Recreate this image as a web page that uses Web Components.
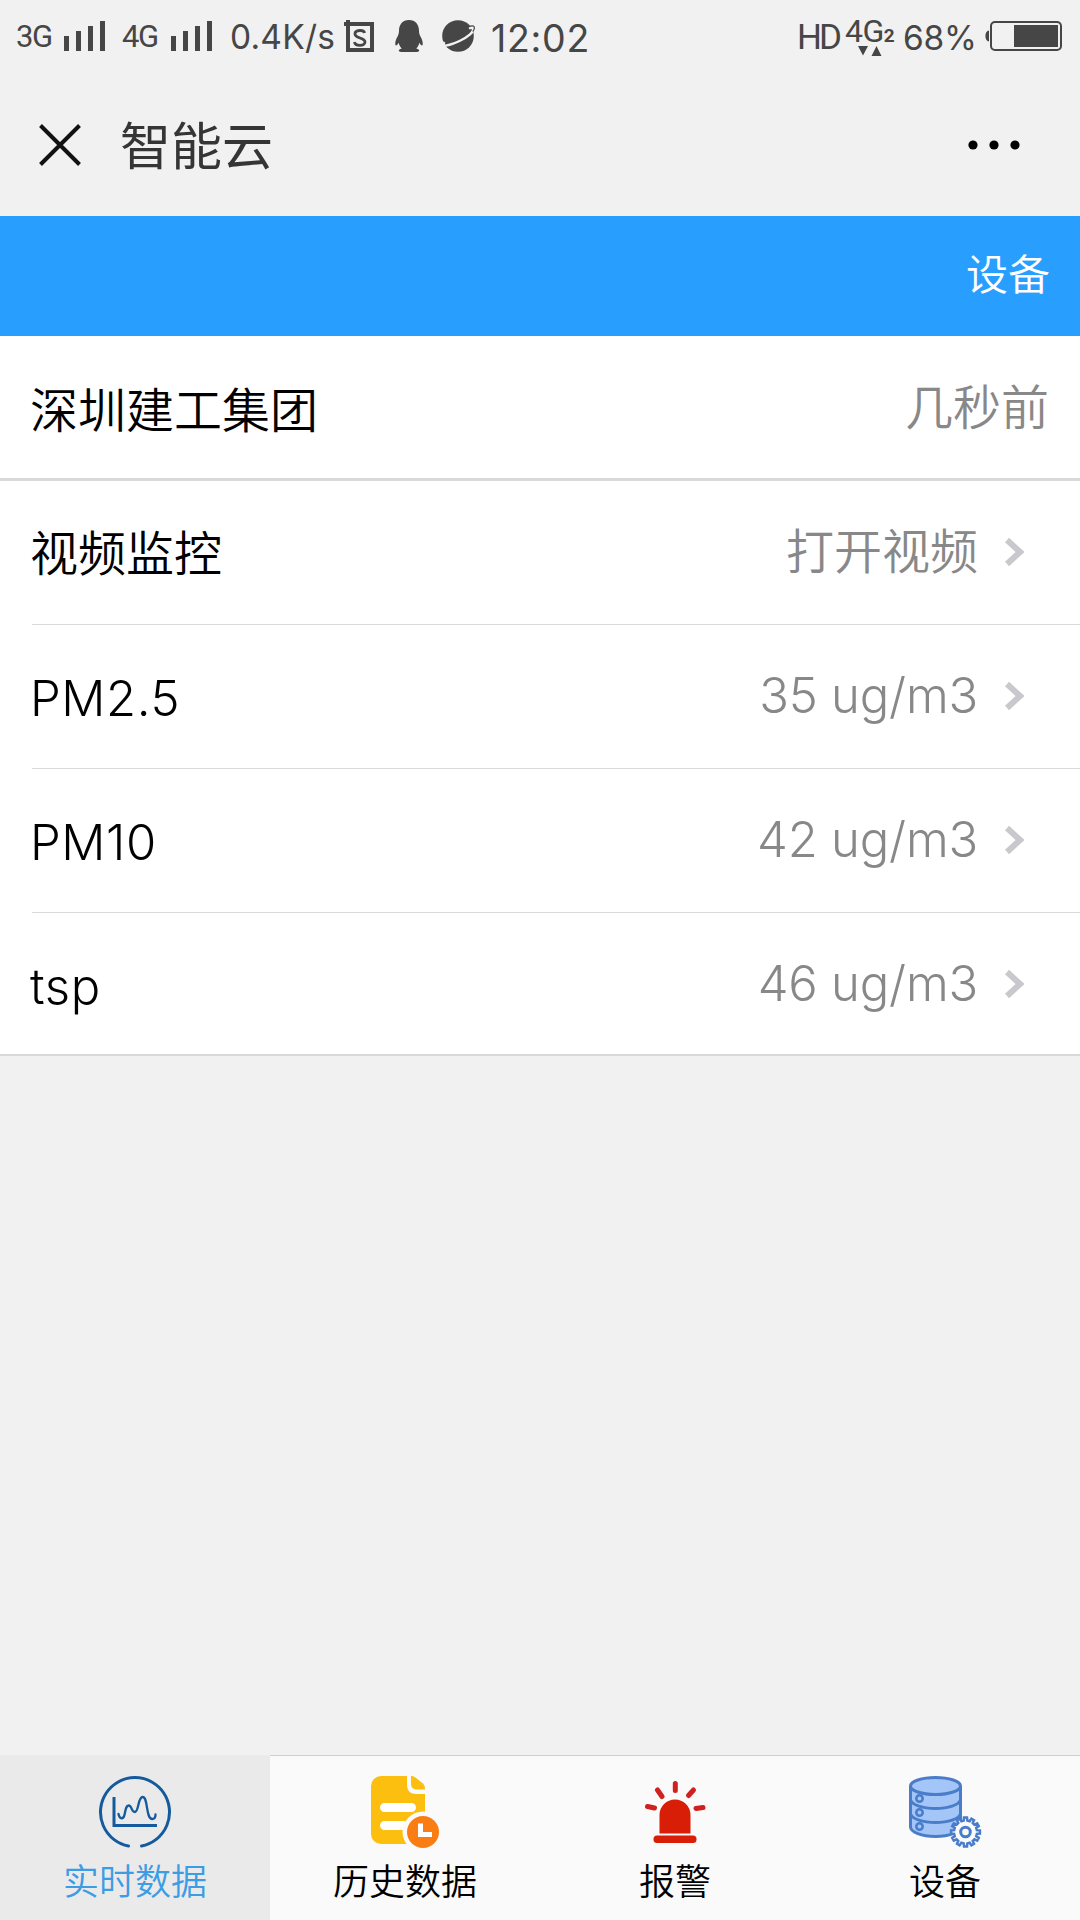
<!DOCTYPE html>
<html lang="zh-CN">
<head>
<meta charset="UTF-8">
<meta name="viewport" content="width=device-width, initial-scale=1.0">
<title>智能云</title>
<style>
  body {
    margin: 0;
    background-color: #f1f1f1;
    font-family: Inter, "Noto Sans CJK SC", sans-serif;
  }
</style>
</head>
<body>
<cloud-app></cloud-app>

<script>
class SignalBars extends HTMLElement {
  constructor() {
    super();
    this.attachShadow({ mode: "open" }).innerHTML = `
    <style>
      :host {
        display: flex;
        align-items: flex-end;
        gap: 7px;
        height: 30px;
      }

      i {
        width: 5px;
        background-color: #464646;
      }
    </style>
    <i style="height: 15px"></i>
    <i style="height: 20px"></i>
    <i style="height: 25px"></i>
    <i style="height: 30px"></i>
  `;
  }
}

customElements.define("signal-bars", SignalBars);

class StatusBar extends HTMLElement {
  constructor() {
    super();
    this.attachShadow({ mode: "open" }).innerHTML = `
    <style>
      :host {
        display: flex;
        justify-content: space-between;
        height: 72px;
        padding: 0 18px 0 16px;
        color: #464646;
        white-space: nowrap;
      }

      .group {
        display: flex;
        align-items: center;
        height: 72px;
      }

      .net {
        width: 36px;
        font-family: Roboto, sans-serif;
        font-size: 31px;
        letter-spacing: -1.5px;
      }

      .speed {
        width: 105px;
        margin-left: 18px;
        padding-top: 2px;
        font-size: 33.5px;
        letter-spacing: 0.2px;
      }

      .time {
        margin-left: 16px;
        padding-top: 4px;
        font-size: 37.5px;
        letter-spacing: 0.7px;
      }

      .hd {
        width: 48px;
        font-family: Roboto, sans-serif;
        font-size: 35px;
        letter-spacing: -3px;
        padding-top: 2px;
      }

      .mobile {
        display: flex;
        flex-direction: column;
        width: 50px;
        padding-top: 2px;
      }

      .mobile div {
        height: 25px;
        font-family: Roboto, sans-serif;
        font-size: 32px;
        line-height: 27px;
        letter-spacing: -0.5px;
      }

      .mobile b {
        font-size: 19px;
      }

      .mobile svg {
        margin: 3px 0 0 13px;
      }

      .percent {
        width: 72px;
        margin: 3px 10px 0 8px;
        font-size: 33.5px;
        letter-spacing: -0.3px;
      }

      svg {
        display: block;
      }
    </style>
    <div class="group">
      <span class="net">3G</span>
      <signal-bars style="margin-left: 12px"></signal-bars>
      <span class="net" style="margin-left: 17px; width: 38px">4G</span>
      <signal-bars style="margin-left: 11px"></signal-bars>
      <span class="speed">0.4K/s</span>
      <svg style="margin-left: 9px" width="31" height="32" viewBox="0 0 31 32">
        <path d="M4 0v32M0 4h30M28 3v29M2 30h28" fill="none" stroke="#464646" stroke-width="4"/>
        <path d="M20.500 13C20 9.500 11 9.500 11 14s10 3.500 10 8-10 4.500-10.500 0" fill="none" stroke="#464646" stroke-width="2.800"/>
      </svg>
      <svg style="margin-left: 20px" width="28" height="32" viewBox="0 0 28 32" fill="#464646">
        <path d="M14 0C7.500 0 4 4.800 4 10.500c0 2-.3 3.500-1.200 5.500C1 19 0 22 .3 24.500c.3 1.800 1.800 1 3.400-1.700.5 2.400 1.500 4.200 3 5.700-2 .5-2.900 1.300-2.900 2 0 1 1.500 1.500 4.700 1.500h11c3.200 0 4.700-.5 4.700-1.500 0-.7-.9-1.500-2.900-2 1.500-1.500 2.500-3.300 3-5.700 1.600 2.700 3.100 3.500 3.400 1.700.3-2.500-.7-5.500-2.500-8.500-.9-2-1.200-3.500-1.200-5.500C24 4.800 20.500 0 14 0z"/>
      </svg>
      <svg style="margin-left: 19px" width="33" height="32" viewBox="0 0 33 32">
        <circle cx="16" cy="16" r="15.800" fill="#464646"/>
        <path d="M27 8.500c2.500-1 3.800-.6 4 .5.800 3-5 8-13.500 12S2.500 26.500 1.800 24.800c-.3-.8 0-1.800.7-2.800" fill="none" stroke="#f1f1f1" stroke-width="2.400"/>
        <path d="M27 6.500c3-1 4.800-.8 5.300.8.300 1.200-.3 2.700-1.500 4.300" fill="none" stroke="#464646" stroke-width="1.200"/>
      </svg>
      <span class="time">12:02</span>
    </div>
    <div class="group">
      <span class="hd">HD</span>
      <div class="mobile">
        <div>4G<b>2</b></div>
        <svg width="24" height="10" viewBox="0 0 24 10" fill="#464646">
          <path d="M0 0h10L5 9.500zM13.500 10h10L18.500 0z"/>
        </svg>
      </div>
      <span class="percent">68%</span>
      <svg width="77" height="30" viewBox="0 0 77 30">
        <path d="M4 9.500C-.8 10 -.8 20 4 20.500z" fill="#464646"/>
        <rect x="6" y="1" width="70" height="28" rx="4" fill="none" stroke="#464646" stroke-width="2"/>
        <rect x="29" y="4" width="44" height="22" fill="#464646"/>
      </svg>
    </div>
  `;
  }
}

customElements.define("status-bar", StatusBar);

class NavBar extends HTMLElement {
  constructor() {
    super();
    this.attachShadow({ mode: "open" }).innerHTML = `
    <style>
      :host {
        display: flex;
        align-items: center;
        height: 144px;
        padding: 2px 60px 0 39px;
        box-sizing: border-box;
      }

      h1 {
        flex: 1;
        margin: 0 0 0 39px;
        padding-top: 3px;
        color: #353535;
        font-size: 51px;
        font-weight: 400;
        line-height: 72px;
      }
    </style>
    <svg width="42" height="42" viewBox="0 0 42 42">
      <path d="M1.500 1.500l39 39M40.500 1.500l-39 39" stroke="#111" stroke-width="4"/>
    </svg>
    <h1><slot></slot></h1>
    <svg width="52" height="10" viewBox="0 0 52 10">
      <circle cx="5" cy="5" r="4.600"/>
      <circle cx="26" cy="5" r="4.600"/>
      <circle cx="47" cy="5" r="4.600"/>
    </svg>
  `;
  }
}

customElements.define("nav-bar", NavBar);

class AppHeader extends HTMLElement {
  constructor() {
    super();
    this.attachShadow({ mode: "open" }).innerHTML = `
    <style>
      :host {
        display: flex;
        align-items: center;
        justify-content: flex-end;
        height: 120px;
        padding: 0 30px 10px 0;
        box-sizing: border-box;
        background-color: #289fff;
        color: #fff;
        font-size: 42px;
        font-weight: 350;
      }
    </style>
    <slot></slot>
  `;
  }
}

customElements.define("app-header", AppHeader);

class CellItem extends HTMLElement {
  constructor() {
    super();
    this.attachShadow({ mode: "open" }).innerHTML = `
    <style>
      :host {
        display: block;
        padding-left: 32px;
        background-color: #fff;
        font-size: 48px;
        font-weight: 350;
        line-height: 72px;
      }

      .row {
        display: flex;
        align-items: center;
        justify-content: space-between;
        height: 144px;
        padding-right: 31px;
        box-sizing: border-box;
        border-bottom: 1px solid #d9d9d9;
      }

      :host([head]) {
        border-bottom: 3px solid #d9d9d9;
      }

      :host([head]) .row {
        height: 142px;
        padding-top: 4px;
        border: 0;
      }

      :host([last]) {
        border-bottom: 2px solid #d9d9d9;
      }

      :host([last]) .row {
        height: 141px;
        padding-top: 2px;
        border: 0;
      }

      .label {
        margin-left: -2px;
        padding-top: 3px;
        color: #000;
      }

      .value {
        display: flex;
        align-items: center;
        padding-bottom: 2px;
        color: #888;
      }

      :host([data]) {
        font-size: 49px;
        font-weight: 300;
      }

      :host([data]) .label {
        padding-top: 5px;
        letter-spacing: 0.6px;
      }

      :host([data]) .value {
        letter-spacing: -0.2px;
      }

      svg {
        display: none;
        margin: 1px 25px 0 27px;
      }

      :host([link]) svg {
        display: block;
      }
    </style>
    <div class="row">
      <span class="label"><slot></slot></span>
      <span class="value">
        <slot name="value"></slot>
        <svg width="19" height="28" viewBox="0 0 19 28">
          <path d="M2 2l13 12L2 26" fill="none" stroke="#c8c8cd" stroke-width="6"/>
        </svg>
      </span>
    </div>
  `;
  }
}

customElements.define("cell-item", CellItem);

class TabItem extends HTMLElement {
  constructor() {
    super();
    this.attachShadow({ mode: "open" }).innerHTML = `
    <style>
      :host {
        display: flex;
        flex: 1;
        flex-direction: column;
        align-items: center;
        padding-top: 20px;
        box-sizing: border-box;
        border-top: 1px solid #d0d0d0;
        color: #000;
        font-size: 36px;
        font-weight: 350;
        line-height: 54px;
      }

      :host([active]) {
        border-top-color: #ececec;
        background-color: #eaeaea;
        color: #3c9ce4;
      }

      ::slotted(svg) {
        display: block;
        width: 72px;
        height: 72px;
        margin-bottom: 7px;
        overflow: visible;
      }
    </style>
    <slot name="icon"></slot>
    <span><slot></slot></span>
  `;
  }
}

customElements.define("tab-item", TabItem);

// outline of the settings gear, teeth are spread evenly round the centre
function gearPath(cx, cy, inner, outer, teeth) {
  const points = [];
  for (let i = 0; i < teeth; i++) {
    [[-0.3, inner], [-0.2, outer], [0.2, outer], [0.3, inner]].forEach(([shift, r]) => {
      const a = ((i + shift) / teeth) * Math.PI * 2;
      points.push(`${(cx + r * Math.sin(a)).toFixed(2)} ${(cy - r * Math.cos(a)).toFixed(2)}`);
    });
  }
  return `M${points.join("L")}z`;
}

class TabBar extends HTMLElement {
  constructor() {
    super();
    this.attachShadow({ mode: "open" }).innerHTML = `
    <style>
      :host {
        display: flex;
        height: 165px;
        background-color: #fafafa;
      }
    </style>
    <tab-item active>
      <svg slot="icon" viewBox="0 0 72 72" fill="none" stroke="#145a9c" stroke-linecap="round">
        <path d="M29.500 70A34.500 34.500 0 1 1 42.500 70" stroke-width="3"/>
        <path d="M15 22.500v27h41.500" stroke-width="3" stroke-linecap="square"/>
        <path d="M19.500 38c1 5.500 5 6 6.200 0 1-5.500 1.500-8.500 4-8.500 3.300 0 2.500 6.500 6 6.500 4.300 0 3-15 8-15 5.500 0 3 22 9.500 22 2 0 3.300-2 3.300-4.500" stroke-width="2.300"/>
      </svg>
      实时数据
    </tab-item>
    <tab-item>
      <svg slot="icon" viewBox="0 0 72 72">
        <path d="M12 0h26v8c0 7 3 10 10 10h8v50H12A10 10 0 0 1 2 58V10A10 10 0 0 1 12 0z" fill="#fdbf0f"/>
        <path d="M42 0c2 0 3 .5 5 2l7 5.500c1.500 1.500 2 3 2 6h-7c-5 0-7-2-7-6z" fill="#fdbf0f"/>
        <path d="M15.500 31.500h27M15.500 49.500H34" stroke="#fff" stroke-width="9" stroke-linecap="round"/>
        <circle cx="54" cy="56" r="20.500" fill="#fafafa"/>
        <circle cx="54" cy="56" r="16" fill="#fa7d14"/>
        <path d="M51.500 47.500v11H63" fill="none" stroke="#fff" stroke-width="5"/>
      </svg>
      历史数据
    </tab-item>
    <tab-item>
      <svg slot="icon" viewBox="0 0 72 72" fill="#d81e06">
        <path d="M20.500 57.500V39a15.500 15.500 0 0 1 31 0v18.500z"/>
        <rect x="14.500" y="59.500" width="43" height="7.500" rx="3.500"/>
        <path d="M36.300 7.500v7M18.500 14l4.500 6.500M54.500 14l-5 5.500M8.500 30.500l7 1.500M64 31.500l-7 1" stroke="#d02020" stroke-width="5" stroke-linecap="round"/>
      </svg>
      报警
    </tab-item>
    <tab-item>
      <svg slot="icon" viewBox="0 0 72 72" fill="#a4c5f8" stroke="#4a7dc9" stroke-width="3">
        <path d="M1.500 10v41c0 5 11 9.500 25 9.500s25-4.500 25-9.500V10"/>
        <ellipse cx="26.500" cy="10" rx="25" ry="8.500"/>
        <path d="M1.500 24c2 5 12 8.500 25 8.500s23-3.500 25-8.500M1.500 38c2 5 12 8.500 25 8.500s23-3.500 25-8.500" fill="none"/>
        <g stroke-width="2.500">
          <circle cx="10.500" cy="22.500" r="3.200"/>
          <circle cx="10.500" cy="36.500" r="3.200"/>
          <circle cx="10.500" cy="50.500" r="3.200"/>
        </g>
        <path d="${gearPath(56.5, 56, 11.5, 14.5, 12)}" fill="#fafafa" stroke-width="2.500"/>
        <circle cx="56.500" cy="56" r="4.800" fill="#fafafa"/>
      </svg>
      设备
    </tab-item>
  `;
  }
}

customElements.define("tab-bar", TabBar);

class CloudApp extends HTMLElement {
  constructor() {
    super();
    this.attachShadow({ mode: "open" }).innerHTML = `
    <style>
      :host {
        display: flex;
        flex-direction: column;
        height: 1920px;
        overflow: hidden;
      }

      main {
        flex: 1;
      }
    </style>
    <status-bar></status-bar>
    <nav-bar>智能云</nav-bar>
    <main>
      <app-header>设备</app-header>
      <cell-item head>深圳建工集团<span slot="value">几秒前</span></cell-item>
      <cell-item link>视频监控<span slot="value">打开视频</span></cell-item>
      <cell-item link data>PM2.5<span slot="value">35 ug/m3</span></cell-item>
      <cell-item link data>PM10<span slot="value">42 ug/m3</span></cell-item>
      <cell-item link data last>tsp<span slot="value">46 ug/m3</span></cell-item>
    </main>
    <tab-bar></tab-bar>
  `;
  }
}

customElements.define("cloud-app", CloudApp);
</script>
</body>
</html>
